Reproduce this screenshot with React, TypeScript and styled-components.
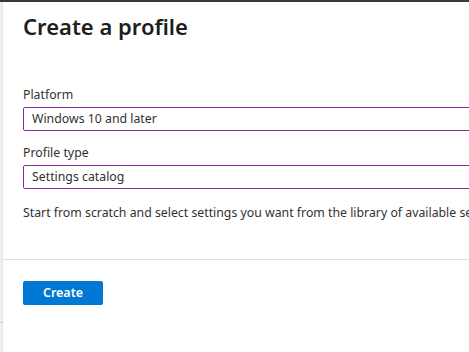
import React from 'react';
import styled, { createGlobalStyle } from 'styled-components';

const GlobalStyle = createGlobalStyle`
  html, body {
    margin: 0;
    padding: 0;
    background: #ffffff;
    overflow: hidden;
  }
  body {
    font-family: 'Noto Sans', 'Open Sans', sans-serif;
    color: #323130;
  }
`;

const Screen = styled.div`
  width: 469px;
  height: 352px;
  overflow: hidden;
  display: flex;
  flex-direction: column;
`;

const TopBar = styled.div`
  height: 2px;
  flex: none;
  background: #3b3a39;
`;

const Body = styled.div`
  flex: 1;
  display: flex;
  min-height: 0;
`;

const Backdrop = styled.div`
  width: 3px;
  flex: none;
  background: #f3f2f1;
  display: flex;
  flex-direction: column;
`;

const BackdropLine = styled.div`
  margin-top: 320px;
  height: 1px;
  background: #d2d0ce;
`;

const Blade = styled.div`
  flex: none;
  width: 620px;
  display: flex;
  flex-direction: column;
  background: #ffffff;
  box-shadow: -1px 0 2px rgba(0, 0, 0, 0.08);
`;

const Content = styled.div`
  padding: 8px 20px 0 20px;
`;

const Title = styled.h1`
  margin: 0;
  font-size: 22px;
  line-height: 32px;
  font-weight: 600;
  color: #201f1e;
`;

const Form = styled.div`
  margin-top: 43px;
  display: flex;
  flex-direction: column;
  gap: 12px;
`;

const Field = styled.div`
  display: flex;
  flex-direction: column;
`;

const Label = styled.label`
  font-size: 12.3px;
  line-height: 20px;
  color: #323130;
  margin-bottom: 2px;
`;

const Select = styled.div`
  height: 24px;
  box-sizing: border-box;
  border: 1px solid #8b2aa9;
  border-radius: 2px;
  padding: 0 8px;
  font-size: 12.3px;
  line-height: 22px;
  color: #323130;
`;

const Description = styled.p`
  margin: 14px 0 0 0;
  font-size: 12.3px;
  line-height: 20px;
  white-space: nowrap;
`;

const Footer = styled.div`
  margin-top: 36px;
  border-top: 1px solid #e1dfdd;
  padding: 20px 20px 0 20px;
`;

const PrimaryButton = styled.button`
  width: 80px;
  height: 24px;
  border: none;
  border-radius: 2px;
  background: #0078d4;
  color: #ffffff;
  font-family: inherit;
  font-size: 12.5px;
  font-weight: 600;
  padding: 0;
  cursor: pointer;
`;

export default function App() {
  return (
    <>
      <GlobalStyle />
      <Screen>
        <TopBar />
        <Body>
          <Backdrop>
            <BackdropLine />
          </Backdrop>
          <Blade>
            <Content>
              <Title>Create a profile</Title>
              <Form>
                <Field>
                  <Label>Platform</Label>
                  <Select>Windows 10 and later</Select>
                </Field>
                <Field>
                  <Label>Profile type</Label>
                  <Select>Settings catalog</Select>
                </Field>
              </Form>
              <Description>
                Start from scratch and select settings you want from the library of available settings
              </Description>
            </Content>
            <Footer>
              <PrimaryButton>Create</PrimaryButton>
            </Footer>
          </Blade>
        </Body>
      </Screen>
    </>
  );
}
